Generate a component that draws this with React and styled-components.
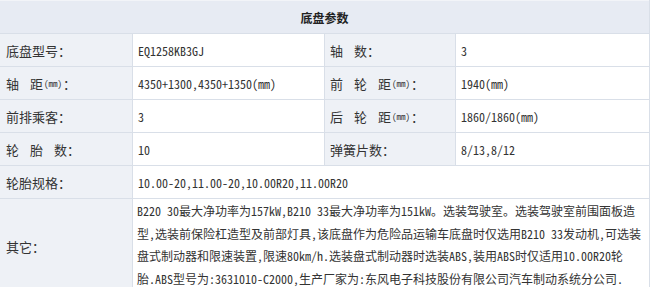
import React from "react";
import styled, { createGlobalStyle } from "styled-components";

const Global = createGlobalStyle`
  html, body { margin: 0; padding: 0; background: #fff; }
  body { font-family: "Noto Sans CJK SC", sans-serif; color: #333; }
`;

const Table = styled.div`
  width: 650px;
  box-sizing: border-box;
  display: grid;
  grid-template-columns: 132px 191px 130px 193px;
  grid-template-rows: 33px repeat(5, 32px) auto;
  gap: 1px;
  padding: 0 1px 1px 0;
  background: #d9dfe8;
`;

const Header = styled.div`
  grid-column: 1 / -1;
  background: #e7ebf3;
  display: flex;
  align-items: center;
  justify-content: center;
  font-family: "Noto Sans CJK SC", sans-serif;
  font-weight: 700;
  font-size: 12px;
  color: #222;
  border-top: 1px solid #f2f4f8;
  box-sizing: border-box;
`;

const Label = styled.div`
  background: #eef1f6;
  display: flex;
  align-items: center;
  padding-left: ${(p) => p.$pl ?? 5}px;
  font-family: "Noto Sans CJK SC", sans-serif;
  font-size: 13px;
  color: #333;
  white-space: pre;
`;

const Gap = styled.span`
  display: inline-block;
  width: 11px;
`;

const Unit = styled.span`
  font-family: "Noto Sans Mono CJK SC", "Liberation Mono", monospace;
  font-size: 9px;
  margin: 0 1px;
`;

const Value = styled.div`
  background: #fff;
  display: flex;
  align-items: center;
  padding-left: 5px;
  font-family: "Noto Sans Mono CJK SC", "Noto Sans CJK SC", monospace;
  font-size: 12px;
  color: #333;
  grid-column: ${(p) => (p.$wide ? "2 / -1" : "auto")};
`;

const LongValue = styled.div`
  background: #fff;
  grid-column: 2 / -1;
  padding: 1px 4px 3px 4px;
  font-family: "Noto Sans Mono CJK SC", "Noto Sans CJK SC", monospace;
  font-size: 12px;
  line-height: 22.5px;
  color: #333;
  white-space: nowrap;
  overflow: hidden;
`;

const mm = <Unit>(mm)</Unit>;
const g = <Gap />;

const otherLines = [
  "B220 30最大净功率为157kW,B210 33最大净功率为151kW。选装驾驶室。选装驾驶室前围面板造",
  "型,选装前保险杠造型及前部灯具,该底盘作为危险品运输车底盘时仅选用B210 33发动机,可选装",
  "盘式制动器和限速装置,限速80km/h.选装盘式制动器时选装ABS,装用ABS时仅适用10.00R20轮",
  "胎.ABS型号为:3631010-C2000,生产厂家为:东风电子科技股份有限公司汽车制动系统分公司.",
];

export default function App() {
  return (
    <>
      <Global />
      <Table>
        <Header>底盘参数</Header>
        <Label $pl={6}>底盘型号：</Label>
        <Value>EQ1258KB3GJ</Value>
        <Label>轴{g}数：</Label>
        <Value>3</Value>

        <Label $pl={6}>轴{g}距{mm}：</Label>
        <Value>4350+1300,4350+1350(mm)</Value>
        <Label>前{g}轮{g}距{mm}：</Label>
        <Value>1940(mm)</Value>

        <Label $pl={6}>前排乘客：</Label>
        <Value>3</Value>
        <Label>后{g}轮{g}距{mm}：</Label>
        <Value>1860/1860(mm)</Value>

        <Label $pl={6}>轮{g}胎{g}数：</Label>
        <Value>10</Value>
        <Label>弹簧片数：</Label>
        <Value>8/13,8/12</Value>

        <Label $pl={6}>轮胎规格：</Label>
        <Value $wide>10.00-20,11.00-20,10.00R20,11.00R20</Value>

        <Label $pl={6}>其它：</Label>
        <LongValue>
          {otherLines.map((l, i) => (
            <React.Fragment key={i}>
              {l}
              {i < otherLines.length - 1 && <br />}
            </React.Fragment>
          ))}
        </LongValue>
      </Table>
    </>
  );
}
